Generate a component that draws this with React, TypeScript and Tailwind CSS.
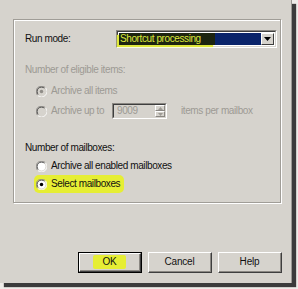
import React from "react";

const font = { fontFamily: '"Liberation Sans", Arial, sans-serif' };

function Radio({ checked, disabled }: { checked?: boolean; disabled?: boolean }) {
  return (
    <svg width="11" height="11" viewBox="0 0 12 12" className="shrink-0">
      <circle cx="6" cy="6" r="5.5" fill={disabled ? "#d6d3cd" : "#ffffff"} />
      <path d="M1.8 10.2 A5.5 5.5 0 0 1 10.2 1.8" stroke="#8a8782" strokeWidth="1" fill="none" />
      <path d="M10.2 1.8 A5.5 5.5 0 0 1 1.8 10.2" stroke="#ffffff" strokeWidth="1" fill="none" />
      <path d="M2.6 9.4 A4.4 4.4 0 0 1 9.4 2.6" stroke="#3e3e3e" strokeWidth="1" fill="none" />
      <path d="M9.4 2.6 A4.4 4.4 0 0 1 2.6 9.4" stroke="#d6d3cd" strokeWidth="1" fill="none" />
      {checked && <circle cx="6" cy="6" r="1.9" fill={disabled ? "#8f8c87" : "#000000"} />}
    </svg>
  );
}

function Btn({ label, def, hl }: { label: string; def?: boolean; hl?: boolean }) {
  return (
    <div
      className={
        "w-[64px] h-[21px] bg-[#d6d3cd] flex items-center justify-center " +
        (def ? "border border-[#000000]" : "")
      }
    >
      <div className="w-full h-full border-t border-l border-t-white border-l-white border-r border-b border-r-[#3e3e3e] border-b-[#3e3e3e] flex">
        <div className="flex-1 border-r border-b border-r-[#8a8782] border-b-[#8a8782] flex items-center justify-center">
          <span
            className={
              "text-[10px] leading-[12px] tracking-[-0.2px] text-[#111] " +
              (hl ? "bg-[#e6ee34] px-[9px] py-[1px] rounded-[2px]" : "")
            }
          >
            {label}
          </span>
        </div>
      </div>
    </div>
  );
}

export default function App() {
  return (
    <div className="w-[298px] h-[289px] bg-[#eeece8]" style={font}>
      <div className="w-[292px] h-[283px] bg-[#d6d3cd] border-r border-r-[#9a9893] shadow-[4px_4px_1px_#3b3b3b] flex flex-col pl-[13px] pt-[19px]">
        {/* group box */}
        <div className="w-[268px] h-[184px] border border-[#a09d97] shadow-[inset_1px_1px_0_#ffffff,1px_1px_0_#ffffff] flex flex-col text-[10px] tracking-[-0.4px] text-[#111]">
          {/* Run mode row */}
          <div className="mt-[10px] h-[18px] flex items-center pl-[11px]">
            <div className="w-[91px] leading-[12px]">Run mode:</div>
            <div className="w-[161px] h-[18px] border-t border-l border-t-[#8a8782] border-l-[#8a8782] border-r border-b border-r-white border-b-white">
              <div className="w-full h-full border-t border-l border-t-[#3e3e3e] border-l-[#3e3e3e] border-r border-b border-r-[#d6d3cd] border-b-[#d6d3cd] bg-white flex p-[1px]">
                <div className="flex-1 bg-[#0a246a] flex relative">
                  <div className="w-[96px] h-full bg-[#1c2410] flex items-center pl-[1px] shadow-[-2px_2px_1px_#dfe83c]">
                    <span className="text-[#dce83c] leading-[12px]">Shortcut processing</span>
                  </div>
                </div>
                <div className="w-[13px] h-full bg-[#d6d3cd] border-t border-l border-t-white border-l-white border-r border-b border-r-[#3e3e3e] border-b-[#3e3e3e] flex items-center justify-center">
                  <svg width="7" height="4" viewBox="0 0 7 4">
                    <path d="M0 0 H7 L3.5 4 Z" fill="#000" />
                  </svg>
                </div>
              </div>
            </div>
          </div>

          {/* Number of eligible items */}
          <div className="mt-[16px] h-[12px] leading-[12px] pl-[11px] text-[#9d9a94]">Number of eligible items:</div>

          <div className="mt-[8px] h-[14px] pl-[22px] flex items-center gap-[4px] text-[#9d9a94]">
            <Radio checked disabled />
            <span className="leading-[12px]">Archive all items</span>
          </div>

          <div className="mt-[5px] h-[16px] pl-[22px] flex items-center text-[#9d9a94]">
            <Radio disabled />
            <span className="leading-[12px] w-[65px] pl-[4px]">Archive up to</span>
            <div className="w-[55px] h-[16px] border-t border-l border-t-[#8a8782] border-l-[#8a8782] border-r border-b border-r-white border-b-white">
              <div className="w-full h-full border-t border-l border-t-[#3e3e3e] border-l-[#3e3e3e] border-r border-b border-r-[#d6d3cd] border-b-[#d6d3cd] bg-[#d6d3cd] flex">
                <span className="flex-1 pl-[3px] leading-[12px] text-[#9d9a94]">9009</span>
                <div className="w-[10px] h-full flex flex-col">
                  <div className="flex-1 border-t border-l border-t-white border-l-white border-r border-b border-r-[#8a8782] border-b-[#8a8782] flex items-center justify-center">
                    <svg width="5" height="3" viewBox="0 0 5 3">
                      <path d="M0 3 H5 L2.5 0 Z" fill="#9d9a94" />
                    </svg>
                  </div>
                  <div className="flex-1 border-t border-l border-t-white border-l-white border-r border-b border-r-[#8a8782] border-b-[#8a8782] flex items-center justify-center">
                    <svg width="5" height="3" viewBox="0 0 5 3">
                      <path d="M0 0 H5 L2.5 3 Z" fill="#9d9a94" />
                    </svg>
                  </div>
                </div>
              </div>
            </div>
            <span className="ml-[14px] leading-[12px]">items per mailbox</span>
          </div>

          {/* Number of mailboxes */}
          <div className="mt-[23px] h-[12px] leading-[12px] pl-[11px]">Number of mailboxes:</div>

          <div className="mt-[5px] h-[14px] pl-[22px] flex items-center gap-[4px]">
            <Radio />
            <span className="leading-[12px]">Archive all enabled mailboxes</span>
          </div>

          <div className="mt-[4px] h-[14px] pl-[20px] flex">
            <div className="h-[18px] -mt-[2px] pl-[2px] pr-[4px] flex items-center gap-[4px] bg-[#e6ee34] rounded-[5px]">
              <Radio checked />
              <span className="leading-[12px]">Select mailboxes</span>
            </div>
          </div>
        </div>

        {/* buttons */}
        <div className="mt-[49px] flex justify-end gap-[6px] pr-[9px]">
          <Btn label="OK" def hl />
          <Btn label="Cancel" />
          <Btn label="Help" />
        </div>
      </div>
    </div>
  );
}
